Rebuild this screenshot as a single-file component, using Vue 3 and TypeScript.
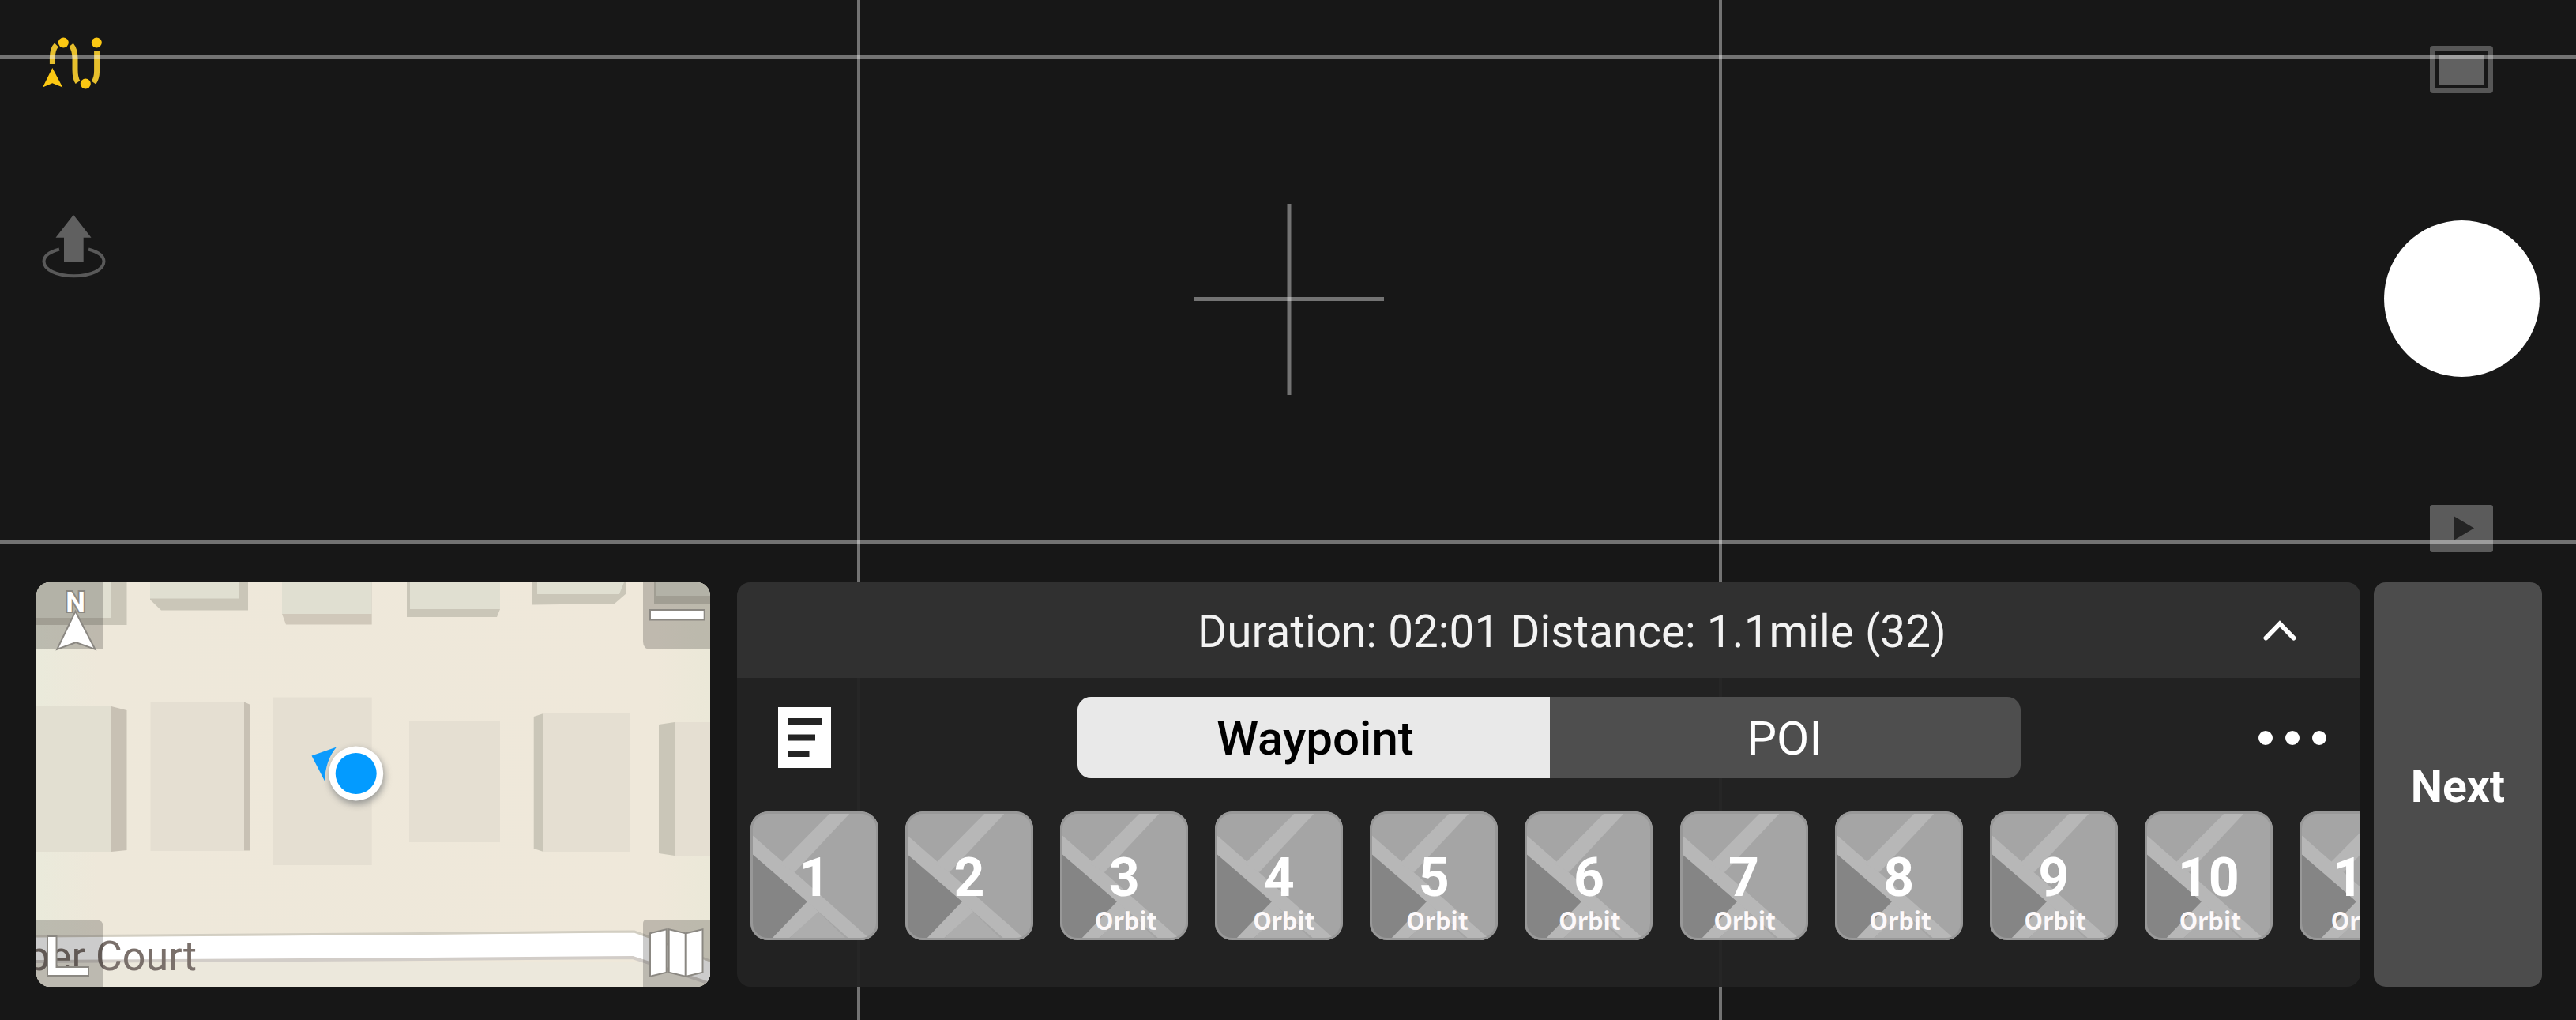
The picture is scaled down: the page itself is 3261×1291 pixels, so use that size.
<script setup lang="ts">
interface Waypoint {
  id: number
  label?: string
  shift: number
}

const shifts = [0, 0, 2, 6, 4, 1, 1, 2, 2, 2, -2]
const waypoints: Waypoint[] = shifts.map((shift, i) => ({
  id: i + 1,
  label: i > 1 ? 'Orbit' : undefined,
  shift,
}))
</script>

<template>
  <div class="screen">
    <main class="view">
      <aside class="tools">
        <svg class="route" width="80" height="72" viewBox="50 44 80 72">
          <g fill="none" stroke="#e6bf2c" stroke-width="7">
            <path d="M66.400 81V73Q66.400 62 71.500 57" />
            <path d="M90 57Q95 63 95 74V88Q95 99 98.500 104" />
            <path d="M122.600 64V90Q122.600 99 118.500 104.500" />
          </g>
          <g fill="#fcc813">
            <circle cx="80.300" cy="54" r="6.500" />
            <circle cx="122.300" cy="54" r="6.500" />
            <circle cx="108.300" cy="106" r="6.500" />
            <path d="M66.300 86L79.300 110.600L66.300 105.300L54 110.600Z" />
          </g>
        </svg>
        <svg class="takeoff" width="84" height="84" viewBox="52 270 84 84">
          <path d="M75 315.500C62 319 55.500 324.500 55.500 331C55.500 341.500 72.500 349.300 93.700 349.300S131.500 341.500 131.500 331C131.500 324.500 125 319 112 315.500" fill="none" stroke="#595959" stroke-width="4" />
          <path d="M93 272L115.500 300.800H105.700V332H81V300.800H70.500Z" fill="#606060" />
        </svg>
      </aside>

      <svg class="crosshair" width="240" height="242" viewBox="0 0 240 242">
        <path d="M0 120.500H240" stroke="#fff" stroke-opacity=".4" stroke-width="5" />
        <path d="M120 0V242" stroke="#fff" stroke-opacity=".4" stroke-width="5" />
      </svg>

      <aside class="camera">
        <svg width="80" height="60" viewBox="0 0 80 60">
          <rect x="3" y="3" width="74" height="54" rx="1" fill="none" stroke="#575757" stroke-width="6" />
          <rect x="12" y="12" width="56.500" height="37" fill="#616161" />
        </svg>
        <button class="shutter" aria-label="Shutter"></button>
        <svg width="80" height="60" viewBox="0 0 80 60">
          <rect width="80" height="60" rx="3" fill="#5b5b5b" />
          <path d="M30 14L56 29.500L30 45Z" fill="#232323" />
        </svg>
      </aside>
    </main>

    <div class="grid">
      <i class="h h1"></i><i class="h h2"></i><i class="v v1"></i><i class="v v2"></i>
    </div>

    <section class="dock">
      <div class="map">
        <svg width="853" height="512" viewBox="0 0 853 512">
          <defs>
            <linearGradient id="ground" x1="0" x2="1" y1="0" y2="0">
              <stop offset="0" stop-color="#eaeadb" />
              <stop offset=".09" stop-color="#eee8da" />
              <stop offset=".92" stop-color="#efe8da" />
              <stop offset="1" stop-color="#ebe8d8" />
            </linearGradient>
            <filter id="soft" x="-50%" y="-50%" width="200%" height="200%">
              <feGaussianBlur stdDeviation="5" />
            </filter>
          </defs>
          <rect width="853" height="512" fill="url(#ground)" />
          <rect y="480" width="853" height="32" fill="#ece8dc" />

          <g fill="#cac6b8">
            <path d="M0 0H114.500V54H0Z" />
            <path d="M144 0H268V35.500H158L144 22Z" />
            <path d="M311 0H424.700V53.500H316L311 40Z" fill="#d0c8ba" />
            <path d="M469 0H587V34L583 44H469Z" />
            <path d="M628 0H747V14L732 27L628 28.500Z" />
            <path d="M782 0H853V27.500H782Z" />
            <path d="M95 157L114.500 162V339L95 341Z" fill="#c8c1b4" />
            <path d="M262 151L271 155V339.500H262Z" fill="#c8c1b4" />
            <path d="M629.700 170L642 166V341L629.700 337Z" />
            <path d="M788 180L808 177V346L788 343Z" />
          </g>
          <g fill="#e0dfd1">
            <path d="M0 0H95V45H0Z" />
            <path d="M144 0H257V20.500H144Z" />
            <path d="M311 0H424.700V40H311Z" />
            <path d="M473 0H587V34H473Z" />
            <path d="M634 0H744L738 15H634Z" />
            <path d="M784 0H853V17H784Z" />
          </g>
          <g fill="#e5dfd2">
            <path d="M0 157H95V341H0Z" fill="#e2dfd1" />
            <path d="M144.500 151H263V340H144.500Z" />
            <path d="M299 145.500H424.700V358H299Z" />
            <path d="M472 175H587V329H472Z" />
            <path d="M642 166H752V341H642Z" />
            <path d="M808 177H853V346.500H808Z" />
          </g>

          <path d="M0 449L424 446.500L757 443L776 450L853 480V507L776 481.500L755 474L424 476.500L0 479Z" fill="#fff" />
          <path d="M0 448L424 445L757 442L776 449L853 479" fill="none" stroke="#d2cec2" stroke-width="3" />
          <path d="M0 480L424 477.500L755 475L776 482L853 508" fill="none" stroke="#d2cdc8" stroke-width="4" />

          <text x="203" y="491" text-anchor="end" class="street">ber Court</text>

          <g fill="#000" fill-opacity=".2">
            <rect width="84.700" height="85" />
            <path d="M768 0H853V85H778Q768 85 768 75Z" />
            <path d="M0 427H75Q85 427 85 437V512H0Z" />
            <path d="M853 427H773Q768 427 768 432V512H853Z" />
          </g>

          <g fill="#fff" stroke="#8b8882" stroke-width="4" paint-order="stroke">
            <text x="49.500" y="36.500" text-anchor="middle" class="north">N</text>
            <path d="M49.500 39L72.300 83L50 75L28.300 83Z" />
            <path d="M778 36H844.700V46.500H778Z" />
            <path d="M15 449H24.500V488H65V497H15Z" />
            <path d="M778 445L796.700 440.500V493L778 497.500Z" />
            <path d="M801.700 440.500L820.700 445V497.500L801.700 493Z" />
            <path d="M823.700 445L842.500 440.500V493L823.700 497.500Z" />
          </g>

          <circle cx="406" cy="246" r="35" fill="#5f6468" opacity=".6" filter="url(#soft)" />
          <path d="M348.500 219.500L380 208.500Q366 225 365 251.500Z" fill="#0c9bfd" />
          <circle cx="404.700" cy="242" r="34.500" fill="#fff" />
          <circle cx="404.700" cy="242" r="26" fill="#039bff" />
        </svg>
      </div>

      <div class="panel">
        <header class="summary">
          <span class="stats">Duration: 02:01 Distance: 1.1mile (32)</span>
          <svg class="chevron" width="42" height="26" viewBox="0 0 42 26">
            <path d="M3.500 22.500L21 4.500L38.500 22.500" fill="none" stroke="#fff" stroke-width="6" stroke-linecap="round" />
          </svg>
        </header>
        <div class="controls">
          <svg width="67" height="77" viewBox="0 0 67 77">
            <rect width="67" height="77" fill="#fff" />
            <path d="M12 14H55.500V22H12ZM12 34.500H47V42.500H12ZM12 55H39.500V63H12Z" fill="#242424" />
          </svg>
          <div class="toggle">
            <button class="tab active">Waypoint</button>
            <button class="tab">POI</button>
          </div>
          <div class="more"><i></i><i></i><i></i></div>
        </div>
        <div class="points">
          <div v-for="p in waypoints" :key="p.id" class="point">
            <svg class="art" width="162" height="163" viewBox="0 0 162 163">
              <path d="M0 0H162V163H0Z" fill="#a5a5a5" />
              <path d="M85 126L123 163H47Z" fill="#adadad" />
              <path d="M0 49L73 115L28 163H0Z" fill="#858585" />
              <g fill="#b7b7b7">
                <path d="M0 28L41 64L153 163H127L73 115L0 52Z" />
                <path d="M38 66L104 -1H129L56 77Z" />
                <path d="M73 113L25 163H46L86 127Z" />
              </g>
            </svg>
            <span class="num">{{ p.id }}</span>
            <span v-if="p.label" class="kind" :style="{ marginLeft: p.shift * 2 + 'px' }">{{ p.label }}</span>
          </div>
        </div>
      </div>

      <button class="next">Next</button>
    </section>
  </div>
</template>

<style>
body {
  margin: 0;
  background: #171717;
}
</style>

<style scoped>
.screen {
  position: relative;
  display: flex;
  flex-direction: column;
  width: 3261px;
  height: 1291px;
  overflow: hidden;
  background: #171717;
  font-family: Roboto, "Liberation Sans", sans-serif;
  color: #fff;
}
svg {
  display: block;
  flex: none;
}
button {
  padding: 0;
  border: 0;
  color: inherit;
  font: inherit;
}
.view {
  display: flex;
  justify-content: space-between;
  height: 737px;
  box-sizing: border-box;
  padding: 0 46px 0 50px;
}
.tools {
  display: flex;
  flex-direction: column;
  width: 196px;
  padding-top: 44px;
}
.takeoff {
  margin: 154px 0 0 2px;
}
.crosshair {
  margin-top: 258px;
}
.camera {
  display: flex;
  flex-direction: column;
  align-items: center;
  width: 198px;
  padding-top: 58px;
}
.shutter {
  flex: none;
  width: 197px;
  height: 198px;
  margin: 161px 0 162px;
  border-radius: 50%;
  background: #fff;
}
.grid {
  position: absolute;
  inset: 0;
}
.grid i {
  position: absolute;
  background: rgba(255, 255, 255, 0.4);
}
.h {
  left: 0;
  right: 0;
  height: 5px;
}
.h1 { top: 70px; }
.h2 { top: 683px; }
.v {
  top: 0;
  bottom: 0;
  width: 4px;
}
.v1 { left: 1085px; }
.v2 { left: 2176px; }
.dock {
  position: relative;
  display: flex;
  height: 512px;
  padding-left: 46px;
}
.map {
  flex: none;
  width: 853px;
  border-radius: 17px;
  overflow: hidden;
}
.street {
  font-size: 52px;
  fill: #7a706b;
}
.north {
  font-size: 35px;
  font-weight: 700;
}
.panel {
  display: flex;
  flex-direction: column;
  flex: none;
  width: 2055px;
  margin-left: 34px;
  border-radius: 17px;
  overflow: hidden;
  background: rgba(35, 35, 35, 0.97);
}
.summary {
  display: flex;
  align-items: center;
  height: 121px;
  box-sizing: border-box;
  padding: 0 81px 0 583px;
  background: rgba(49, 49, 49, 0.97);
}
.stats {
  padding-top: 4px;
  font-size: 56.7px;
  white-space: pre;
  color: #f2f2f2;
}
.chevron {
  margin-left: auto;
}
.controls {
  display: flex;
  align-items: center;
  height: 103px;
  padding: 24px 43px 0 52px;
}
.toggle {
  display: flex;
  width: 1194px;
  height: 103px;
  margin-left: 312px;
  border-radius: 17px;
  overflow: hidden;
  background: #4e4e4e;
}
.tab {
  flex: 1;
  padding-top: 2px;
  background: none;
  font-size: 60px;
}
.tab.active {
  padding-left: 4px;
  background: #e9e9e9;
  color: #000;
  font-weight: 500;
}
.tab:last-child {
  padding-right: 2px;
}
.more {
  display: flex;
  gap: 16px;
  margin-left: auto;
}
.more i {
  width: 18px;
  height: 18px;
  border-radius: 50%;
  background: #fff;
}
.points {
  display: flex;
  gap: 34.1px;
  margin-top: 42px;
  padding-left: 17px;
}
.point {
  position: relative;
  display: flex;
  flex-direction: column;
  align-items: center;
  flex: none;
  width: 162px;
  height: 163px;
  box-sizing: border-box;
  padding-top: 50px;
  border-radius: 22px;
  overflow: hidden;
}
.art {
  position: absolute;
  inset: 0;
}
.point::after {
  content: "";
  position: absolute;
  inset: 0;
  border: 3px solid #989898;
  border-radius: 22px;
}
.num {
  position: relative;
  z-index: 1;
  font-size: 68px;
  line-height: 68px;
  font-weight: 700;
}
.kind {
  position: relative;
  z-index: 1;
  font-family: "Noto Sans CJK SC", "Noto Sans", sans-serif;
  font-size: 30.4px;
  line-height: 38px;
  font-weight: 700;
  color: #fdf9fa;
}
.next {
  flex: none;
  width: 213px;
  margin-left: 17px;
  padding-top: 4px;
  border-radius: 15px;
  background: #4c4c4c;
  font-size: 57px;
  font-weight: 700;
}
</style>
